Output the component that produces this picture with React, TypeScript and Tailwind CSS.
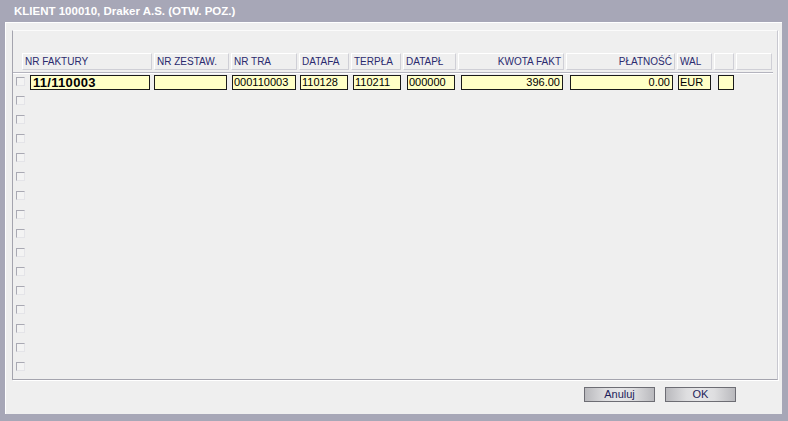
import React from "react";

const headers: { label: string; w: string; right?: boolean }[] = [
  { label: "NR FAKTURY", w: "w-[130px]" },
  { label: "NR ZESTAW.", w: "w-[75px]" },
  { label: "NR TRA", w: "w-[66px]" },
  { label: "DATAFA", w: "w-[50px]" },
  { label: "TERPŁA", w: "w-[50px]" },
  { label: "DATAPŁ", w: "w-[53px]" },
  { label: "KWOTA FAKT", w: "w-[106px]", right: true },
  { label: "PŁATNOŚĆ", w: "w-[109px]", right: true },
  { label: "WAL", w: "w-[35px]" },
  { label: "", w: "w-[20px]" },
  { label: "", w: "w-[36px]" },
];

const fields: { v: string; cls: string; right?: boolean; bold?: boolean }[] = [
  { v: "11/110003", cls: "ml-[4px] w-[120px]", bold: true },
  { v: "", cls: "ml-[4px] w-[73px]" },
  { v: "000110003", cls: "ml-[5px] w-[64px]" },
  { v: "110128", cls: "ml-[4px] w-[48px]" },
  { v: "110211", cls: "ml-[5px] w-[48px]" },
  { v: "000000", cls: "ml-[6px] w-[48px]" },
  { v: "396.00", cls: "ml-[6px] w-[102px]", right: true },
  { v: "0.00", cls: "ml-[7px] w-[103px]", right: true },
  { v: "EUR", cls: "ml-[5px] w-[33px]" },
  { v: "", cls: "ml-[7px] w-[16px]" },
];

function Check() {
  return (
    <div className="w-[9px] h-[9px] border-t border-l border-t-[#a9a9b3] border-l-[#a9a9b3] border-b border-r border-b-[#e4e4e8] border-r-[#e4e4e8] bg-[#f3f3f3]" />
  );
}

function Btn({ label }: { label: string }) {
  return (
    <div className="w-[71px] h-[15px] border border-[#6d6d74] bg-[linear-gradient(to_right,#b9b9bd,#dedee0_30%,#e6e6e8_50%,#dedee0_70%,#b9b9bd)] flex items-center justify-center text-[11px] leading-none text-[#1e1e5a]">
      {label}
    </div>
  );
}

export default function App() {
  const rows = Array.from({ length: 16 }, (_, i) => i);
  return (
    <div
      className="w-[788px] h-[421px] bg-[#a7a7b7] flex flex-col overflow-hidden"
      style={{ fontFamily: '"Liberation Sans", Arial, sans-serif' }}
    >
      <div className="h-[22px] shrink-0 flex items-center pl-[14px] pt-[1px] text-white font-bold text-[11.5px]">
        KLIENT 100010, Draker A.S. (OTW. POZ.)
      </div>
      <div className="flex-1 ml-[5px] mr-[6px] mb-[7px] bg-[#efefef] border-l border-t border-white flex flex-col">
        <div className="mt-[7px] ml-[6px] mr-[4px] h-[350px] border-l border-b border-r border-t border-l-[#a4a4ae] border-b-[#a4a4ae] border-r-[#c8c8d0] border-t-[#fbfbfb] shadow-[1px_1px_0_#ffffff] flex flex-col">
          <div className="mt-[22px] ml-[9px] flex gap-[2px] h-[17px]">
            {headers.map((h, i) => (
              <div
                key={i}
                className={`${h.w} h-[17px] border border-[#cfcfd6] border-l-white border-t-white bg-[#efefef] flex items-center px-[2px] text-[10px] leading-none text-[#2a2a6e] ${h.right ? "justify-end" : ""}`}
              >
                {h.label}
              </div>
            ))}
          </div>
          <div className="mt-[2px] mr-[4px] h-[1px] bg-[#b4b4be] shadow-[0_1px_0_#ffffff]" />
          <div className="flex flex-col pt-[2px]">
            {rows.map((r) => (
              <div key={r} className="h-[19px] flex items-start">
                <div className="ml-[3px] mt-[2px]">
                  <Check />
                </div>
                {r === 0 && (
                  <div className="flex ml-[1px]">
                    {fields.map((f, i) => (
                      <div
                        key={i}
                        className={`${f.cls} h-[15px] border border-[#1a1a1a] bg-[#ffffc6] flex items-center leading-none text-black whitespace-nowrap overflow-hidden ${f.right ? "justify-end pr-[2px]" : "pl-[1px]"} ${f.bold ? "font-bold text-[13px] pl-[2px] tracking-[0.3px]" : "text-[11px]"}`}
                      >
                        {f.v}
                      </div>
                    ))}
                  </div>
                )}
              </div>
            ))}
          </div>
        </div>
        <div className="flex justify-end gap-[10px] mt-[7px] mr-[46px]">
          <Btn label="Anuluj" />
          <Btn label="OK" />
        </div>
      </div>
    </div>
  );
}
